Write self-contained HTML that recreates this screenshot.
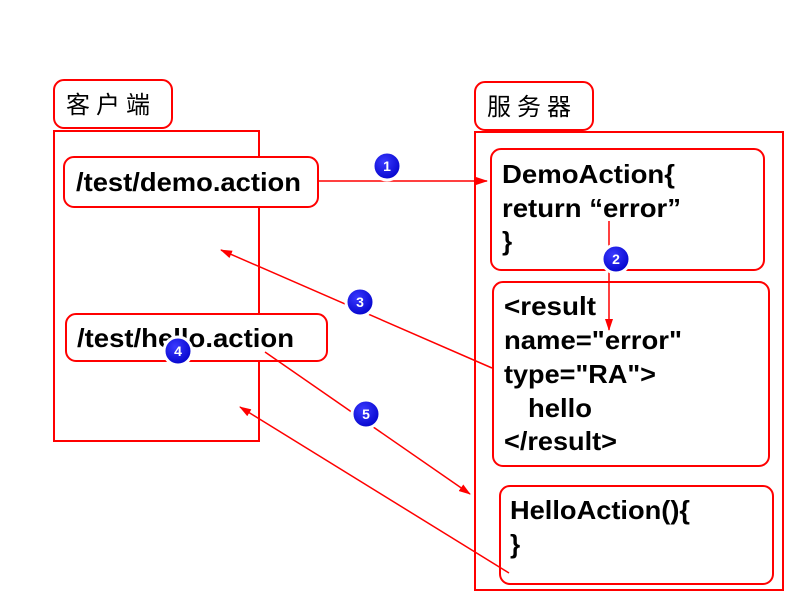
<!DOCTYPE html>
<html><head><meta charset="utf-8"><style>
html,body{margin:0;padding:0;background:#fff;width:800px;height:600px;overflow:hidden}
svg text{font-family:"Liberation Sans",Arial,sans-serif;font-weight:bold;font-size:26px;fill:#000}
svg text.cn{font-family:"Liberation Sans","Noto Sans CJK SC",sans-serif;font-weight:normal;font-size:24px;letter-spacing:6px}
.c text{font-size:14px;fill:#fff;font-weight:bold}
</style></head><body>
<svg width="800" height="600" viewBox="0 0 800 600" xmlns="http://www.w3.org/2000/svg">
<defs>
<marker id="ah" markerWidth="12" markerHeight="8" refX="11" refY="4" orient="auto" markerUnits="userSpaceOnUse">
<path d="M0,0 L12,4 L0,8 Z" fill="#f00"/></marker>
<radialGradient id="g" cx="0.4" cy="0.35" r="0.7"><stop offset="0" stop-color="#3a3aff"/><stop offset="1" stop-color="#0000c8"/></radialGradient>
</defs>
<g fill="none" stroke="#f00" stroke-width="2">
<rect x="54" y="131" width="205" height="310"/>
<rect x="475" y="132" width="308" height="458"/>
</g>
<g fill="#fff" stroke="#f00" stroke-width="2">
<rect x="54" y="80" width="118" height="48" rx="10"/>
<rect x="475" y="82" width="118" height="48" rx="10"/>
<rect x="64" y="157" width="254" height="50" rx="10"/>
<rect x="66" y="314" width="261" height="47" rx="10"/>
<rect x="491" y="149" width="273" height="121" rx="10"/>
<rect x="493" y="282" width="276" height="184" rx="10"/>
<rect x="500" y="486" width="273" height="98" rx="10"/>
</g>
<g lengthAdjust="spacingAndGlyphs">
<text class="cn" x="66" y="113">客户端</text>
<text class="cn" x="487" y="115">服务器</text>
<text x="76" y="191" textLength="225" lengthAdjust="spacingAndGlyphs">/test/demo.action</text>
<text x="77" y="347" textLength="217" lengthAdjust="spacingAndGlyphs">/test/hello.action</text>
<text x="502" y="183" textLength="173" lengthAdjust="spacingAndGlyphs">DemoAction{</text>
<text x="502" y="217" textLength="179" lengthAdjust="spacingAndGlyphs">return “error”</text>
<text x="502" y="250">}</text>
<text x="504" y="315" textLength="92" lengthAdjust="spacingAndGlyphs">&lt;result</text>
<text x="504" y="349" textLength="178" lengthAdjust="spacingAndGlyphs">name="error"</text>
<text x="504" y="383" textLength="152" lengthAdjust="spacingAndGlyphs">type="RA"&gt;</text>
<text x="528" y="417" textLength="64" lengthAdjust="spacingAndGlyphs">hello</text>
<text x="504" y="450" textLength="113" lengthAdjust="spacingAndGlyphs">&lt;/result&gt;</text>
<text x="510" y="519" textLength="180" lengthAdjust="spacingAndGlyphs">HelloAction(){</text>
<text x="510" y="553">}</text>
</g>
<g stroke="#f00" stroke-width="1.5" fill="none">
<line x1="318" y1="181" x2="487" y2="181" marker-end="url(#ah)"/>
<line x1="609" y1="221" x2="609" y2="330" marker-end="url(#ah)"/>
<line x1="492" y1="368" x2="221" y2="250" marker-end="url(#ah)"/>
<line x1="265" y1="352" x2="470" y2="494" marker-end="url(#ah)"/>
<line x1="509" y1="573" x2="240" y2="407" marker-end="url(#ah)"/>
</g>
<g stroke="#fff" stroke-width="3">
<circle cx="387" cy="166" r="14" fill="url(#g)"/>
<circle cx="616" cy="259" r="14" fill="url(#g)"/>
<circle cx="360" cy="302" r="14" fill="url(#g)"/>
<circle cx="178" cy="351" r="14" fill="url(#g)"/>
<circle cx="366" cy="414" r="14" fill="url(#g)"/>
</g>
<g class="c">
<text x="387" y="171" text-anchor="middle">1</text>
<text x="616" y="264" text-anchor="middle">2</text>
<text x="360" y="307" text-anchor="middle">3</text>
<text x="178" y="356" text-anchor="middle">4</text>
<text x="366" y="419" text-anchor="middle">5</text>
</g>
</svg>
</body></html>
